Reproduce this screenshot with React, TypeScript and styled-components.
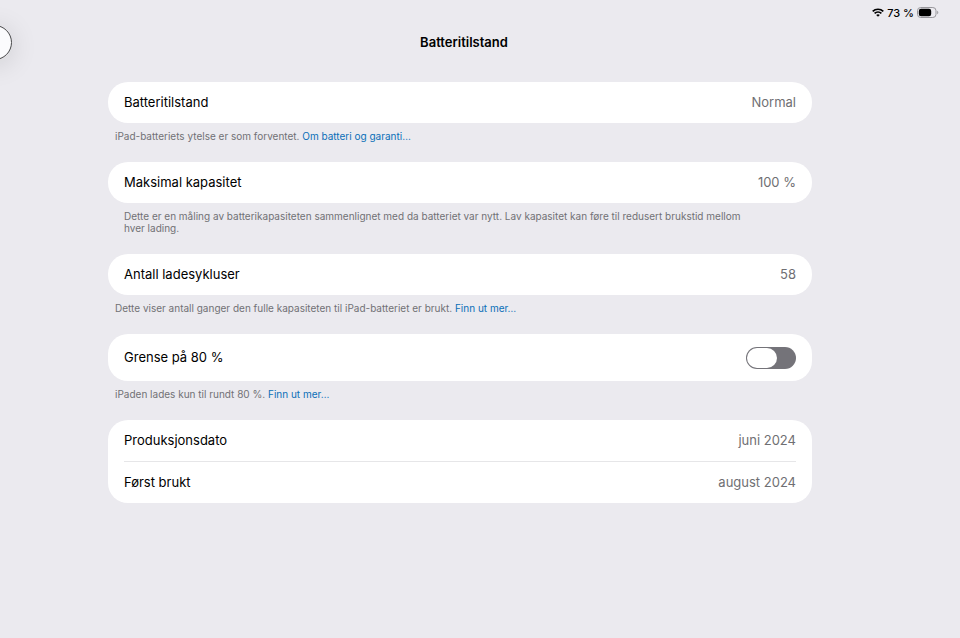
import React from 'react';
import styled, { createGlobalStyle } from 'styled-components';

const GlobalStyle = createGlobalStyle`
  * { box-sizing: border-box; }
  body { margin: 0; background: #ebeaef; color: #000; font-family: Inter, sans-serif; overflow-x: hidden; }
`;

const Page = styled.div`
  position: relative;
  min-height: 100vh;
  overflow: hidden;
  background: #ebeaef;
`;

const StatusBar = styled.div`
  display: flex;
  justify-content: flex-end;
  align-items: center;
  gap: 3px;
  height: 25px;
  padding-right: 21px;
  font-size: 11px;
  font-weight: 500;
`;

const BackButton = styled.button`
  position: absolute;
  left: -23px;
  top: 25px;
  width: 35px;
  height: 35px;
  padding: 0;
  border: 1px solid #4a4a4c;
  border-radius: 50%;
  background: #fbfbfd;
  box-shadow: 0 4px 28px rgba(0, 0, 0, 0.14);
`;

const Title = styled.h1`
  margin: 0;
  padding: 9px 32px 0 0;
  text-align: center;
  font-size: 13px;
  line-height: 17px;
  font-weight: 600;
`;

const Content = styled.main`
  margin: 31px 148px 0 108px;
`;

const Section = styled.section`
  margin-bottom: 20px;
`;

const Card = styled.div`
  padding: 0 16px;
  border-radius: 20px;
  background: #fff;
`;

const Row = styled.div<{ $tall?: boolean }>`
  display: flex;
  align-items: center;
  justify-content: space-between;
  height: ${({ $tall }) => ($tall ? 47 : 41)}px;
  font-size: 13px;
  line-height: 15px;
  & + & { border-top: 1px solid #e6e6e8; height: 42px; }
`;

const Value = styled.span`
  color: #6f6f73;
`;

const Note = styled.p<{ $inset?: boolean }>`
  margin: 0;
  padding: 7px ${({ $inset }) => ($inset ? 60 : 0)}px 0 ${({ $inset }) => ($inset ? 16 : 7)}px;
  color: #717175;
  font-size: 10px;
  line-height: 12px;
`;

const Link = styled.a`
  color: #0a6fb8;
  text-decoration: none;
`;

const Toggle = styled.input`
  appearance: none;
  display: flex;
  align-items: center;
  width: 50px;
  height: 22px;
  margin: 0;
  padding: 0 1px;
  border-radius: 11px;
  background: #747379;
  &::before {
    content: '';
    width: 30px;
    height: 20px;
    border-radius: 10px;
    background: #fff;
  }
  &:checked { justify-content: flex-end; }
`;

export default function App() {
  return (
    <Page>
      <GlobalStyle />
      <StatusBar>
        <svg width="12" height="9" viewBox="0 0 12 9" aria-hidden="true" fill="none" stroke="#000" strokeWidth="1.7">
          <path d="M.7 3.4a7.6 7.6 0 0 1 10.6 0M2.6 5.4a4.9 4.9 0 0 1 6.8 0" />
          <path d="M6 8.8 4.2 7a2.6 2.6 0 0 1 3.6 0Z" fill="#000" stroke="none" />
        </svg>
        <span>73 %</span>
        <svg width="22" height="11" viewBox="0 0 22 11" aria-hidden="true">
          <rect x=".5" y=".5" width="18.5" height="10" rx="3.2" fill="none" stroke="#98979c" />
          <rect x="1.8" y="1.8" width="12.4" height="7.4" rx="2.2" />
          <path d="M20.2 3.8c1.5.5 1.5 2.9 0 3.4Z" fill="#98979c" />
        </svg>
      </StatusBar>
      <BackButton aria-label="Tilbake" />
      <Title>Batteritilstand</Title>
      <Content>
        <Section>
          <Card><Row><span>Batteritilstand</span><Value>Normal</Value></Row></Card>
          <Note>iPad-batteriets ytelse er som forventet. <Link href="#garanti">Om batteri og garanti…</Link></Note>
        </Section>
        <Section>
          <Card><Row><span>Maksimal kapasitet</span><Value>100 %</Value></Row></Card>
          <Note $inset>Dette er en måling av batterikapasiteten sammenlignet med da batteriet var nytt. Lav kapasitet kan føre til redusert brukstid mellom hver lading.</Note>
        </Section>
        <Section>
          <Card><Row><span>Antall ladesykluser</span><Value>58</Value></Row></Card>
          <Note>Dette viser antall ganger den fulle kapasiteten til iPad-batteriet er brukt. <Link href="#sykluser">Finn ut mer…</Link></Note>
        </Section>
        <Section>
          <Card><Row $tall><label htmlFor="limit">Grense på 80 %</label><Toggle id="limit" type="checkbox" role="switch" /></Row></Card>
          <Note>iPaden lades kun til rundt 80 %. <Link href="#grense">Finn ut mer…</Link></Note>
        </Section>
        <Section>
          <Card>
            <Row><span>Produksjonsdato</span><Value>juni 2024</Value></Row>
            <Row><span>Først brukt</span><Value>august 2024</Value></Row>
          </Card>
        </Section>
      </Content>
    </Page>
  );
}
